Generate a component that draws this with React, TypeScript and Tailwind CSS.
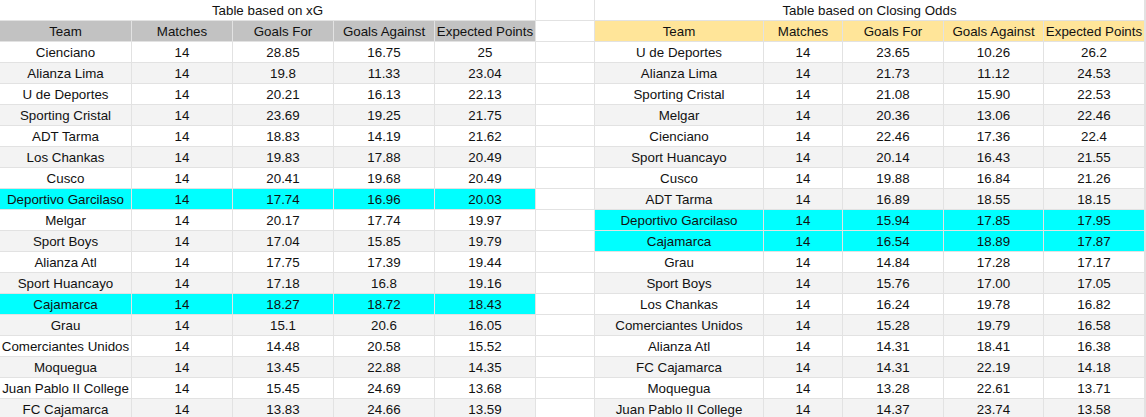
import React from "react";

type Row = [string, number, string, string, string];

const xgRows: Row[] = [
  ["Cienciano", 14, "28.85", "16.75", "25"],
  ["Alianza Lima", 14, "19.8", "11.33", "23.04"],
  ["U de Deportes", 14, "20.21", "16.13", "22.13"],
  ["Sporting Cristal", 14, "23.69", "19.25", "21.75"],
  ["ADT Tarma", 14, "18.83", "14.19", "21.62"],
  ["Los Chankas", 14, "19.83", "17.88", "20.49"],
  ["Cusco", 14, "20.41", "19.68", "20.49"],
  ["Deportivo Garcilaso", 14, "17.74", "16.96", "20.03"],
  ["Melgar", 14, "20.17", "17.74", "19.97"],
  ["Sport Boys", 14, "17.04", "15.85", "19.79"],
  ["Alianza Atl", 14, "17.75", "17.39", "19.44"],
  ["Sport Huancayo", 14, "17.18", "16.8", "19.16"],
  ["Cajamarca", 14, "18.27", "18.72", "18.43"],
  ["Grau", 14, "15.1", "20.6", "16.05"],
  ["Comerciantes Unidos", 14, "14.48", "20.58", "15.52"],
  ["Moquegua", 14, "13.45", "22.88", "14.35"],
  ["Juan Pablo II College", 14, "15.45", "24.69", "13.68"],
  ["FC Cajamarca", 14, "13.83", "24.66", "13.59"],
];

const oddsRows: Row[] = [
  ["U de Deportes", 14, "23.65", "10.26", "26.2"],
  ["Alianza Lima", 14, "21.73", "11.12", "24.53"],
  ["Sporting Cristal", 14, "21.08", "15.90", "22.53"],
  ["Melgar", 14, "20.36", "13.06", "22.46"],
  ["Cienciano", 14, "22.46", "17.36", "22.4"],
  ["Sport Huancayo", 14, "20.14", "16.43", "21.55"],
  ["Cusco", 14, "19.88", "16.84", "21.26"],
  ["ADT Tarma", 14, "16.89", "18.55", "18.15"],
  ["Deportivo Garcilaso", 14, "15.94", "17.85", "17.95"],
  ["Cajamarca", 14, "16.54", "18.89", "17.87"],
  ["Grau", 14, "14.84", "17.28", "17.17"],
  ["Sport Boys", 14, "15.76", "17.00", "17.05"],
  ["Los Chankas", 14, "16.24", "19.78", "16.82"],
  ["Comerciantes Unidos", 14, "15.28", "19.79", "16.58"],
  ["Alianza Atl", 14, "14.31", "18.41", "16.38"],
  ["FC Cajamarca", 14, "14.31", "22.19", "14.18"],
  ["Moquegua", 14, "13.28", "22.61", "13.71"],
  ["Juan Pablo II College", 14, "14.37", "23.74", "13.58"],
];

const headers = ["Team", "Matches", "Goals For", "Goals Against", "Expected Points"];
const leftW = ["w-[132px]", "w-[101px]", "w-[101px]", "w-[101px]", "w-[101px]"];
const rightW = ["w-[169px]", "w-[79px]", "w-[101px]", "w-[100px]", "w-[101px]"];

const highlight = ["Deportivo Garcilaso", "Cajamarca"];

const cell =
  "box-border shrink-0 h-full pt-px border-r border-b border-[#e2e2e2] flex items-center justify-center whitespace-nowrap overflow-hidden";

function rowBg(team: string, i: number) {
  if (highlight.includes(team)) return "bg-[#00ffff]";
  return i % 2 === 1 ? "bg-[#f3f3f3]" : "bg-white";
}

function Cells({ row, widths, bg }: { row: Row; widths: string[]; bg: string }) {
  return (
    <>
      {row.map((v, j) => (
        <div key={j} className={`${cell} ${widths[j]} ${bg}`}>
          {v}
        </div>
      ))}
    </>
  );
}

export default function App() {
  return (
    <div className="w-[1146px] h-[417px] overflow-hidden bg-white text-[#111] text-[13.33px] leading-none font-['Liberation_Sans',Arial,sans-serif]">
      {/* title row */}
      <div className="flex h-[21px]">
        <div className={`${cell} w-[536px]`}>Table based on xG</div>
        <div className={`${cell} w-[59px]`} />
        <div className={`${cell} w-[550px]`}>Table based on Closing Odds</div>
        <div className={`${cell} flex-1`} />
      </div>

      {/* header row */}
      <div className="flex h-[21px]">
        {headers.map((h, j) => (
          <div key={h} className={`${cell} ${leftW[j]} bg-[#c2c2c2]`}>
            {h}
          </div>
        ))}
        <div className={`${cell} w-[59px]`} />
        {headers.map((h, j) => (
          <div key={h} className={`${cell} ${rightW[j]} bg-[#ffe599]`}>
            {h}
          </div>
        ))}
        <div className={`${cell} flex-1`} />
      </div>

      {xgRows.map((r, i) => (
        <div key={i} className="flex h-[21px]">
          <Cells row={r} widths={leftW} bg={rowBg(r[0], i)} />
          <div className={`${cell} w-[59px]`} />
          <Cells row={oddsRows[i]} widths={rightW} bg={rowBg(oddsRows[i][0], i)} />
          <div className={`${cell} flex-1`} />
        </div>
      ))}
    </div>
  );
}
